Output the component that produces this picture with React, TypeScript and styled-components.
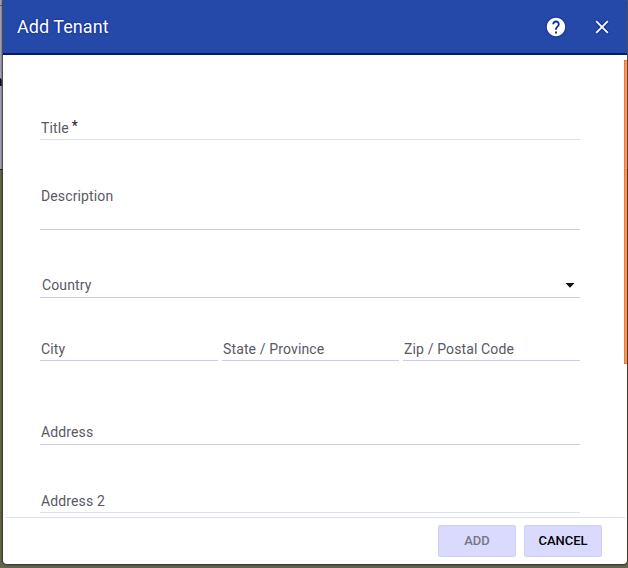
import React from "react";
import styled, { createGlobalStyle } from "styled-components";

const GlobalStyle = createGlobalStyle`
  * { box-sizing: border-box; }
  body { margin: 0; overflow: hidden; font-family: Roboto, "Liberation Sans", sans-serif; }
`;

const Backdrop = styled.div`
  position: relative;
  width: 628px;
  height: 568px;
  padding: 0 1px 4px 3px;
  overflow: hidden;
  background: linear-gradient(#a5a5bf 0 169px, #25251a 169px 170px, #66664c 170px);
`;

const PageEdge = styled.div`
  position: absolute;
  left: 0;
  top: 5px;
  width: 3px;
  height: 1px;
  background: #66666c;
`;

const PageText = styled.span`
  position: absolute;
  left: -5px;
  top: 73px;
  font-size: 14px;
  line-height: 16px;
  font-weight: 500;
  color: #000;
`;

const Dialog = styled.section`
  position: relative;
  display: flex;
  flex-direction: column;
  height: 564px;
  background: #fff;
  border-radius: 0 0 4px 4px;
  overflow: hidden;
  box-shadow: 0 0 2px 1px #303022;
`;

const Header = styled.header`
  flex: none;
  display: flex;
  align-items: center;
  height: 55px;
  padding: 0 16px 0 14px;
  background: #2449a9;
  border-bottom: 2px solid #071777;
  color: #fff;
`;

const Heading = styled.h1`
  flex: 1;
  margin: 0;
  font-size: 18px;
  line-height: 24px;
  font-weight: 400;
  letter-spacing: 0.05px;
  text-shadow: 0 0 2px #00108a;
`;

const IconButton = styled.button`
  display: flex;
  padding: 0;
  border: 0;
  background: none;
  color: #fff;
  filter: drop-shadow(0 0 1px #00108a);
  & + & { margin-left: 26px; }
`;

const Body = styled.div`
  flex: none;
  display: flex;
  height: 462px;
  justify-content: space-between;
`;

const Form = styled.form`
  width: 540px;
  margin-left: 37px;
`;

const Field = styled.div<{ $height: number; $drop?: number; $inset?: number; $faint?: boolean }>`
  display: flex;
  flex: 1;
  align-items: flex-end;
  justify-content: space-between;
  height: ${(p) => p.$height}px;
  padding: 0 5px ${(p) => p.$drop ?? 3}px ${(p) => p.$inset ?? 1}px;
  border-bottom: 1px solid ${(p) => (p.$faint ? "#dcdcfa" : "#cbcbe9")};
`;

const Label = styled.label`
  font-size: 14px;
  line-height: 16px;
  letter-spacing: 0.13px;
  color: #595964;
  white-space: nowrap;
`;

const Required = styled.span`
  display: inline-block;
  margin-left: 3px;
  font-size: 14px;
  line-height: 1;
  transform: translateY(-2px);
  color: #222230;
`;

const Arrow = styled.svg`
  display: block;
  margin-bottom: 5px;
`;

const FieldRow = styled.div`
  display: grid;
  grid-template-columns: 178px 177px 177px;
  gap: 4px;
`;

const ScrollThumb = styled.div`
  width: 3px;
  height: 304px;
  margin-top: 5px;
  background: #ff954f;
  border: 1px solid #e97832;
  border-right: 0;
`;

const Footer = styled.footer`
  flex: 1;
  display: flex;
  justify-content: flex-end;
  align-items: flex-start;
  gap: 8px;
  margin: 0 2px;
  padding: 7px 23px 0 0;
  border-top: 1px solid #dedef4;
`;

const Button = styled.button<{ $muted?: boolean }>`
  width: 78px;
  height: 32px;
  padding: 0;
  border: 1px solid #cfcff5;
  border-radius: 2px;
  background: #dadaff;
  font: 500 13px/30px Roboto, "Liberation Sans", sans-serif;
  color: ${(p) => (p.$muted ? "#77777f" : "#000")};
`;

export default function App() {
  return (
    <>
      <GlobalStyle />
      <Backdrop>
        <PageEdge />
        <PageText>a</PageText>
        <Dialog>
          <Header>
            <Heading>Add Tenant</Heading>
            <IconButton aria-label="Help">
              <svg width="22" height="22" viewBox="0 0 24 24" fill="currentColor">
                <path d="M12 2C6.48 2 2 6.48 2 12s4.48 10 10 10 10-4.48 10-10S17.52 2 12 2zm1 17h-2v-2h2v2zm2.07-7.75l-.9.92C13.45 12.9 13 13.5 13 15h-2v-.5c0-1.1.45-2.1 1.17-2.83l1.24-1.26c.37-.36.59-.86.59-1.41 0-1.1-.9-2-2-2s-2 .9-2 2H8c0-2.21 1.79-4 4-4s4 1.79 4 4c0 .88-.36 1.68-.93 2.25z" />
              </svg>
            </IconButton>
            <IconButton aria-label="Close">
              <svg width="18" height="18" viewBox="0 0 18 18" fill="none" stroke="currentColor" strokeWidth="1.9">
                <path d="M3.2 3.2l11.6 11.6M14.8 3.2L3.2 14.8" />
              </svg>
            </IconButton>
          </Header>
          <Body>
            <Form>
              <Field $height={85} $faint><Label>Title<Required>*</Required></Label></Field>
              <Field $height={90} $drop={25}><Label>Description</Label></Field>
              <Field $height={68} $drop={4} $inset={2}>
                <Label>Country</Label>
                <Arrow width="10" height="5" viewBox="0 0 10 5"><path d="M0.5 0h9L5 4.7z" fill="#111108" /></Arrow>
              </Field>
              <FieldRow>
                <Field $height={63}><Label>City</Label></Field>
                <Field $height={63}><Label>State / Province</Label></Field>
                <Field $height={63}><Label>Zip / Postal Code</Label></Field>
              </FieldRow>
              <Field $height={84} $drop={4}><Label>Address</Label></Field>
              <Field $height={68} $faint><Label>Address 2</Label></Field>
            </Form>
            <ScrollThumb />
          </Body>
          <Footer>
            <Button type="button" $muted disabled>ADD</Button>
            <Button type="button">CANCEL</Button>
          </Footer>
        </Dialog>
      </Backdrop>
    </>
  );
}
